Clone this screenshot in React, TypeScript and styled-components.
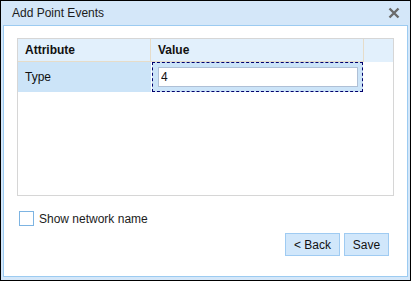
import * as React from "react";
import styled, { createGlobalStyle } from "styled-components";

const Global = createGlobalStyle`
  html, body {
    margin: 0;
    padding: 0;
    background: #fff;
  }
  * {
    box-sizing: border-box;
  }
`;

const Window = styled.div`
  width: 411px;
  height: 281px;
  border: 1px solid #000;
  background: #d4e7f9;
  display: flex;
  flex-direction: column;
  font-family: Arial, "Liberation Sans", sans-serif;
  font-size: 12px;
  color: #111;
`;

const TitleBar = styled.div`
  height: 24px;
  flex: none;
  display: flex;
  align-items: center;
  justify-content: space-between;
  padding: 0 10px 1px 11px;
  color: #1b1b1b;
`;

const Close = styled.button`
  border: none;
  background: transparent;
  padding: 0;
  width: 12px;
  height: 12px;
  display: flex;
  cursor: pointer;
`;

const Body = styled.div`
  flex: 1;
  margin: 0 2px 3px 2px;
  border: 1px solid #9ccbf1;
  background: #fff;
  padding: 12px 13px 0 13px;
  display: flex;
  flex-direction: column;
`;

const Grid = styled.div`
  height: 158px;
  border: 1px solid #d6d6d6;
  display: flex;
  flex-direction: column;
`;

const HeaderRow = styled.div`
  display: flex;
  height: 23px;
  background: #e2f0fc;
`;

const HeaderCell = styled.div<{ w: number }>`
  width: ${(p) => p.w}px;
  flex: none;
  border-right: 1px solid #e6dcc9;
  border-bottom: 1px solid #e6dcc9;
  padding-left: 7px;
  display: flex;
  align-items: center;
  font-weight: bold;
`;

const Row = styled.div`
  display: flex;
  height: 30px;
`;

const Cell = styled.div<{ w: number }>`
  width: ${(p) => p.w}px;
  flex: none;
  background: #cce4f8;
  padding-left: 7px;
  display: flex;
  align-items: center;
`;

const EditCell = styled.div<{ w: number }>`
  width: ${(p) => p.w}px;
  flex: none;
  margin-left: 1px;
  background: #cce4f8;
  border: 1px dashed #00006e;
  padding: 4px 4px 4px 5px;
  display: flex;
`;

const Input = styled.input`
  flex: 1;
  min-width: 0;
  border: 1px solid #afc0d6;
  background: #fff;
  font: inherit;
  color: #111;
  padding: 0 2px;
  outline: none;
`;

const CheckRow = styled.label`
  display: flex;
  align-items: center;
  gap: 5px;
  margin: 15px 0 0 2px;
  height: 15px;
  color: #1b1b1b;
`;

const Box = styled.span`
  width: 15px;
  height: 15px;
  border: 1px solid #7db4e2;
  background: #fff;
`;

const Footer = styled.div`
  display: flex;
  justify-content: flex-end;
  gap: 4px;
  margin-top: 7px;
  padding-right: 5px;
`;

const Button = styled.button<{ w: number }>`
  width: ${(p) => p.w}px;
  height: 23px;
  border: 1px solid #9fcbf2;
  background: #d1e7fb;
  font: inherit;
  color: #111;
  padding: 0;
`;

export default function App() {
  return (
    <>
      <Global />
      <Window>
        <TitleBar>
          <span>Add Point Events</span>
          <Close aria-label="Close">
            <svg width="12" height="12" viewBox="0 0 12 12">
              <path
                d="M1.5 1.5 L10.5 10.5 M10.5 1.5 L1.5 10.5"
                stroke="#6b6b6b"
                strokeWidth="2.4"
              />
            </svg>
          </Close>
        </TitleBar>
        <Body>
          <Grid>
            <HeaderRow>
              <HeaderCell w={133}>Attribute</HeaderCell>
              <HeaderCell w={213}>Value</HeaderCell>
            </HeaderRow>
            <Row>
              <Cell w={133}>Type</Cell>
              <EditCell w={211}>
                <Input defaultValue="4" />
              </EditCell>
            </Row>
          </Grid>
          <CheckRow>
            <Box />
            Show network name
          </CheckRow>
          <Footer>
            <Button w={55}>&lt; Back</Button>
            <Button w={45}>Save</Button>
          </Footer>
        </Body>
      </Window>
    </>
  );
}
